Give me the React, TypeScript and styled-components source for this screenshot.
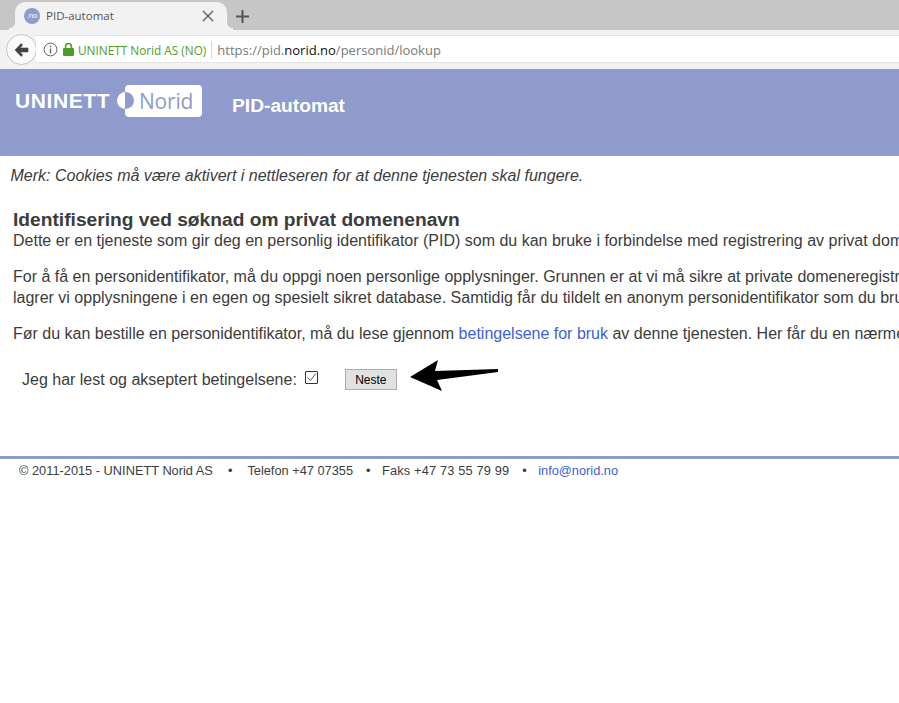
import { createGlobalStyle } from "styled-components";
import styled from "styled-components";

const GlobalStyle = createGlobalStyle`
  html, body {
    margin: 0;
    padding: 0;
    background: #fff;
    overflow: hidden;
  }
  body {
    font-family: "Liberation Sans", Arial, sans-serif;
  }
`;

export default function App() {
  return (
    <Page>
      <GlobalStyle />
      <TabStrip>
        <Tab>
          <Favicon>.no</Favicon>
          <TabTitle>PID-automat</TabTitle>
          <svg width="12" height="12" viewBox="0 0 12 12">
            <path d="M1 1 L11 11 M11 1 L1 11" stroke="#555" strokeWidth="1.2" fill="none" />
          </svg>
        </Tab>
        <NewTab>
          <svg width="13" height="13" viewBox="0 0 13 13">
            <path d="M6.5 0 V13 M0 6.5 H13" stroke="#555" strokeWidth="2" fill="none" />
          </svg>
        </NewTab>
      </TabStrip>
      <Toolbar>
        <BackButton>
          <svg width="15" height="14" viewBox="0 0 15 14">
            <path d="M7.2 0.6 L1 7 L7.2 13.4 L8.6 12 L6 9 H14 V5 H6 L8.6 2 Z" fill="#444" stroke="#444" strokeWidth="0.6" strokeLinejoin="round" />
          </svg>
        </BackButton>
        <UrlBar>
          <svg width="15" height="15" viewBox="0 0 15 15">
            <circle cx="7.5" cy="7.5" r="6.4" stroke="#666" strokeWidth="1" fill="none" />
            <path d="M7.5 6.5 V11.5 M7.5 3.5 V5.2" stroke="#666" strokeWidth="1.4" fill="none" />
          </svg>
          <svg width="11" height="13" viewBox="0 0 11 13" style={{ marginLeft: 5 }}>
            <rect x="0" y="5" width="11" height="8" rx="1" fill="#4f9d26" />
            <path d="M2.6 6 V3.4 a2.9 2.9 0 0 1 5.8 0 V6" stroke="#4f9d26" strokeWidth="1.6" fill="none" />
          </svg>
          <Identity>UNINETT Norid AS (NO)</Identity>
          <UrlDivider />
          <Url>
            https://pid.<UrlHost>norid.no</UrlHost>/personid/lookup
          </Url>
        </UrlBar>
      </Toolbar>
      <Banner>
        <Logo>
          <LogoWord>UNINETT</LogoWord>
          <LogoPill>
            <LogoDisc />
            <LogoName>Norid</LogoName>
          </LogoPill>
        </Logo>
        <BannerTitle>PID-automat</BannerTitle>
      </Banner>
      <Notice>Merk: Cookies må være aktivert i nettleseren for at denne tjenesten skal fungere.</Notice>
      <Content>
        <Heading>Identifisering ved søknad om privat domenenavn</Heading>
        <Paragraph>
          Dette er en tjeneste som gir deg en personlig identifikator (PID) som du kan bruke i forbindelse med registrering av privat domenenavn.
        </Paragraph>
        <Paragraph>
          For å få en personidentifikator, må du oppgi noen personlige opplysninger. Grunnen er at vi må sikre at private domeneregistreringer
          <br />
          lagrer vi opplysningene i en egen og spesielt sikret database. Samtidig får du tildelt en anonym personidentifikator som du bruker
        </Paragraph>
        <Paragraph>
          Før du kan bestille en personidentifikator, må du lese gjennom <TextLink>betingelsene for bruk</TextLink> av denne tjenesten. Her får du en nærmere
        </Paragraph>
        <AcceptRow>
          <AcceptLabel>Jeg har lest og akseptert betingelsene:</AcceptLabel>
          <CheckBox>
            <svg width="11" height="11" viewBox="0 0 11 11">
              <path d="M1.5 5.5 L4.5 8.5 L9.8 1.5" stroke="#555" strokeWidth="1" fill="none" />
            </svg>
          </CheckBox>
          <NextButton type="button">Neste</NextButton>
          <ArrowMark width="89" height="32" viewBox="0 0 89 32">
            <path d="M0 17 L28 0 L25 11 L88 9 L88 12 L27 20 L32 31 Z" fill="#000" />
          </ArrowMark>
        </AcceptRow>
      </Content>
      <Footer>
        <span>© 2011-2015 - UNINETT Norid AS</span>
        <Dot $wide>•</Dot>
        <span>Telefon +47 07355</span>
        <Dot>•</Dot>
        <FaxText>Faks +47 73 55 79 99</FaxText>
        <Dot>•</Dot>
        <TextLink>info@norid.no</TextLink>
      </Footer>
    </Page>
  );
}

const Page = styled.div`
  width: 899px;
  height: 703px;
  overflow: hidden;
  background: #fff;
`;

const TabStrip = styled.div`
  height: 30px;
  background: #c6c6c6;
  display: flex;
  align-items: flex-end;
  padding-left: 15px;
  box-sizing: border-box;
`;

const Tab = styled.div`
  position: relative;
  width: 212px;
  height: 28px;
  background: #f2f2f2;
  border-radius: 10px 10px 0 0;
  display: flex;
  align-items: center;
  padding: 0 0 1px 9px;
  box-sizing: border-box;

  &::before,
  &::after {
    content: "";
    position: absolute;
    bottom: 0;
    width: 6px;
    height: 8px;
  }
  &::before {
    left: -6px;
    background: radial-gradient(circle at 0 0, #c6c6c6 6px, #f2f2f2 6.5px);
  }
  &::after {
    right: -6px;
    background: radial-gradient(circle at 100% 0, #c6c6c6 6px, #f2f2f2 6.5px);
  }
`;

const Favicon = styled.div`
  width: 16px;
  height: 16px;
  border-radius: 50%;
  background: #8e9bcc;
  color: #fff;
  font-size: 8px;
  line-height: 16px;
  text-align: center;
`;

const TabTitle = styled.div`
  margin-left: 6px;
  width: 156px;
  font-family: "Open Sans", sans-serif;
  font-size: 11.5px;
  color: #555;
  white-space: nowrap;
`;

const NewTab = styled.div`
  margin-left: 9px;
  height: 28px;
  display: flex;
  align-items: center;
`;

const Toolbar = styled.div`
  height: 39px;
  background: #f2f2f2;
  display: flex;
  align-items: center;
  padding: 0 0 1px 6px;
  box-sizing: border-box;
`;

const BackButton = styled.div`
  width: 31px;
  height: 31px;
  border-radius: 50%;
  border: 1px solid #c4c4c4;
  background: #fafafa;
  box-sizing: border-box;
  padding-top: 2px;
  display: flex;
  align-items: center;
  justify-content: center;
  flex: none;
`;

const UrlBar = styled.div`
  flex: 1;
  height: 28px;
  margin-left: -1px;
  background: #fff;
  border-top: 1px solid #e2e2e2;
  border-bottom: 1px solid #e2e2e2;
  box-sizing: border-box;
  display: flex;
  align-items: center;
  padding: 1px 0 0 7px;
`;

const Identity = styled.span`
  margin-left: 4px;
  font-family: "Open Sans", sans-serif;
  font-size: 11.8px;
  color: #4f9d26;
  white-space: nowrap;
`;

const UrlDivider = styled.div`
  width: 1px;
  height: 18px;
  background: #d8d8d8;
  margin: 0 5px 0 5px;
`;

const Url = styled.span`
  font-family: "Open Sans", sans-serif;
  font-size: 13px;
  color: #7a7a7a;
  white-space: nowrap;
`;

const UrlHost = styled.span`
  color: #111;
`;

const Banner = styled.div`
  height: 87px;
  background: #8e9bcc;
  display: flex;
  align-items: flex-start;
  padding: 16px 0 0 15px;
  box-sizing: border-box;
`;

const Logo = styled.div`
  display: flex;
  align-items: center;
  width: 217px;
  height: 32px;
`;

const LogoWord = styled.span`
  font-size: 21px;
  font-weight: 700;
  letter-spacing: 0.6px;
  color: #fff;
  width: 110px;
  white-space: nowrap;
`;

const LogoPill = styled.div`
  position: relative;
  width: 77px;
  height: 32px;
  background: #fff;
  border-radius: 4px;
  display: flex;
  align-items: center;
  padding-left: 14px;
  box-sizing: border-box;
`;

const LogoDisc = styled.div`
  position: absolute;
  left: -8px;
  top: 7px;
  width: 17px;
  height: 17px;
  border-radius: 50%;
  background: linear-gradient(90deg, #fff 50%, #8e9bcc 50%);
`;

const LogoName = styled.span`
  font-family: "Open Sans", sans-serif;
  font-size: 21px;
  letter-spacing: -0.2px;
  color: #8e9bcc;
`;

const BannerTitle = styled.div`
  font-size: 19.2px;
  font-weight: 700;
  color: #fff;
  line-height: 23px;
  margin-top: 9px;
  white-space: nowrap;
`;

const Notice = styled.div`
  margin: 10px 0 0 10.5px;
  font-size: 16px;
  line-height: 19px;
  font-style: italic;
  color: #3c3c3c;
  white-space: nowrap;
`;

const Content = styled.div`
  margin: 24px 0 0 13px;
  color: #3c3c3c;
`;

const Heading = styled.div`
  font-size: 19.2px;
  font-weight: 700;
  line-height: 21px;
  white-space: nowrap;
`;

const Paragraph = styled.div`
  font-size: 16px;
  line-height: 21px;
  margin-bottom: 15px;
  white-space: nowrap;
`;

const TextLink = styled.span`
  color: #4060d8;
`;

const AcceptRow = styled.div`
  display: flex;
  align-items: center;
  height: 32px;
  margin-top: 18px;
  padding-left: 9px;
`;

const AcceptLabel = styled.span`
  margin-top: 4px;
  font-size: 16px;
  white-space: nowrap;
`;

const CheckBox = styled.div`
  width: 13px;
  height: 13px;
  margin: -1px 0 0 8px;
  border: 1px solid #333;
  border-radius: 1px;
  box-sizing: border-box;
  display: flex;
  align-items: center;
  justify-content: center;
`;

const NextButton = styled.button`
  width: 52px;
  height: 21px;
  margin: 3px 0 0 27px;
  padding: 0;
  background: #e1e1e1;
  border: 1px solid #adadad;
  font-family: "Liberation Sans", Arial, sans-serif;
  font-size: 12px;
  color: #000;
`;

const ArrowMark = styled.svg`
  margin: -4px 0 0 13px;
`;

const Footer = styled.div`
  margin-top: 62px;
  border-top: 3px solid #8e9bcc;
  padding: 4px 0 0 19px;
  display: flex;
  font-size: 12.8px;
  line-height: 15px;
  color: #3c3c3c;
  white-space: nowrap;
`;

const FaxText = styled.span`
  letter-spacing: 0.15px;
`;

const Dot = styled.span<{ $wide?: boolean }>`
  margin: ${(p) => (p.$wide ? "0 15px" : "0 11.5px 0 13px")};
`;
